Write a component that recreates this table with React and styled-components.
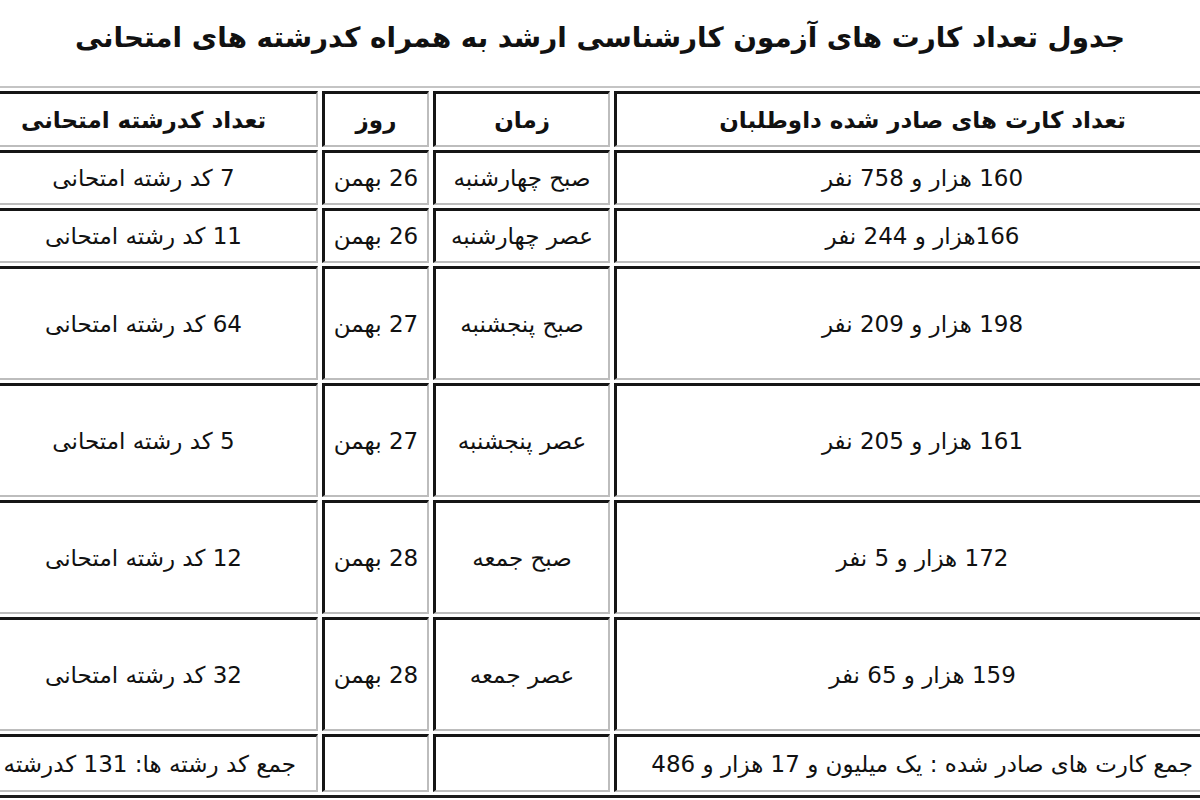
import React from "react";
import styled, { createGlobalStyle } from "styled-components";

const GlobalStyle = createGlobalStyle`
  html, body {
    margin: 0;
    padding: 0;
    background: #ffffff;
    overflow: hidden;
  }
  body {
    font-family: "DejaVu Sans", "Noto Sans", sans-serif;
    color: #111111;
  }
`;

const Page = styled.div`
  width: 1200px;
  height: 800px;
  overflow: hidden;
  direction: rtl;
  background: #ffffff;
`;

const Title = styled.h1`
  margin: 0;
  padding-top: 19px;
  height: 86px;
  box-sizing: border-box;
  text-align: center;
  font-size: 27.8px;
  font-weight: bold;
  line-height: 38px;
  color: #111111;
  white-space: nowrap;
`;

const Table = styled.table`
  width: 1275px;
  margin-right: -37px;
  table-layout: fixed;
  border-collapse: separate;
  border-spacing: 4px 3px;
  border-style: solid;
  border-width: 2px 3px 3px 2px;
  border-color: #c4c4c4 #1a1a1a #1a1a1a #c4c4c4;
  background: #ffffff;
`;

const Row = styled.tr`
  height: ${(p) => p.$h}px;
`;

const cellBase = `
  box-sizing: border-box;
  border-style: solid;
  border-width: 3px 2px 2px 3px;
  border-color: #151515 #bdbdbd #bdbdbd #151515;
  vertical-align: middle;
  white-space: nowrap;
  overflow: hidden;
  color: #111111;
`;

const Head = styled.th`
  ${cellBase}
  width: ${(p) => p.$w}px;
  padding: 0 6px;
  font-size: 23px;
  font-weight: bold;
  text-align: center;
`;

const Cell = styled.td`
  ${cellBase}
  padding: 0 ${(p) => p.$pad ?? 6}px;
  font-size: 23px;
  font-weight: normal;
  text-align: ${(p) => (p.$start ? "right" : "center")};
`;

const columns = [
  { label: "تعداد کارت های صادر شده داوطلبان", w: 616 },
  { label: "زمان", w: 177 },
  { label: "روز", w: 107 },
  { label: "تعداد کدرشته امتحانی", w: 350 },
];

const rows = [
  { h: 55, cells: ["160 هزار و  758 نفر", "صبح چهارشنبه", "26 بهمن", "7 کد رشته امتحانی"] },
  { h: 55, cells: ["166هزار و 244 نفر", "عصر چهارشنبه", "26 بهمن", "11 کد رشته امتحانی"] },
  { h: 114, cells: ["198 هزار و 209  نفر", "صبح پنجشنبه", "27 بهمن", "64 کد رشته امتحانی"] },
  { h: 114, cells: ["161 هزار و 205 نفر", "عصر پنجشنبه", "27 بهمن", "5 کد رشته امتحانی"] },
  { h: 114, cells: ["172 هزار و 5 نفر", "صبح جمعه", "28 بهمن", "12 کد رشته امتحانی"] },
  { h: 114, cells: ["159 هزار و 65 نفر", "عصر جمعه", "28 بهمن", "32 کد رشته امتحانی"] },
];

export default function App() {
  return (
    <>
      <GlobalStyle />
      <Page>
        <Title>جدول تعداد کارت های آزمون کارشناسی ارشد به همراه کدرشته های امتحانی</Title>
        <Table>
          <thead>
            <Row $h={56}>
              {columns.map((c) => (
                <Head key={c.label} $w={c.w}>
                  {c.label}
                </Head>
              ))}
            </Row>
          </thead>
          <tbody>
            {rows.map((r, i) => (
              <Row key={i} $h={r.h}>
                {r.cells.map((c, j) => (
                  <Cell key={j}>{c}</Cell>
                ))}
              </Row>
            ))}
            <Row $h={58}>
              <Cell $start $pad={35}>جمع کارت های صادر شده : یک میلیون و 17 هزار و 486</Cell>
              <Cell />
              <Cell />
              <Cell $start $pad={20}>جمع کد رشته ها: 131 کدرشته</Cell>
            </Row>
          </tbody>
        </Table>
      </Page>
    </>
  );
}
